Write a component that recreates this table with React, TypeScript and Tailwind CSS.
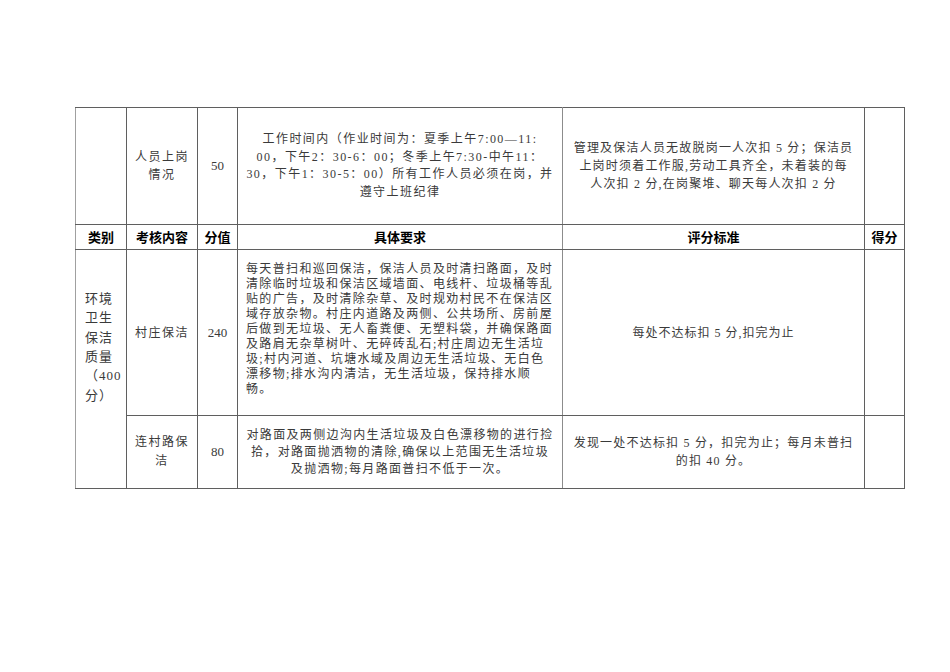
const body = "font-['Liberation_Serif','Noto_Sans_CJK_SC',serif] text-[#3a3a3a]";
const cell = "border border-[#5f5f5f] align-middle p-0";
const head = "border border-[#5f5f5f] align-middle p-0 text-center text-[13px] font-bold text-black font-['Noto_Sans_CJK_SC',sans-serif]";

function Lines({ lines, className }: { lines: string[]; className: string }) {
  return (
    <div className={className}>
      {lines.map((l, i) => (
        <div key={i}>{l}</div>
      ))}
    </div>
  );
}

export default function App() {
  return (
    <div className={`min-h-screen w-full bg-white pl-[75px] pt-[107px] ${body}`}>
      <table className="w-[829px] table-fixed border-collapse">
        <colgroup>
          <col className="w-[51px]" />
          <col className="w-[71px]" />
          <col className="w-[40px]" />
          <col className="w-[325px]" />
          <col className="w-[302px]" />
          <col className="w-[40px]" />
        </colgroup>
        <tbody>
          <tr className="h-[117px]">
            <td className={`${cell} border-l-[#a0a0a0]`}></td>
            <td className={cell}>
              <Lines lines={["人员上岗", "情况"]} className="text-center text-[12px] leading-[18px] tracking-[1.5px]" />
            </td>
            <td className={`${cell} text-center text-[13px]`}>50</td>
            <td className={`${cell} border-l-[#8c8c8c] border-r-[#8c8c8c]`}>
              <Lines
                lines={[
                  "工作时间内（作业时间为：夏季上午7:00—11:",
                  "00，下午2：30-6：00；冬季上午7:30-中午11：",
                  "30，下午1：30-5：00）所有工作人员必须在岗，并",
                  "遵守上班纪律",
                ]}
                className="text-center text-[12px] leading-[17.5px] tracking-[1.45px]"
              />
            </td>
            <td className={cell}>
              <Lines
                lines={[
                  "管理及保洁人员无故脱岗一人次扣 5 分；保洁员",
                  "上岗时须着工作服,劳动工具齐全，未着装的每",
                  "人次扣 2 分,在岗聚堆、聊天每人次扣 2 分",
                ]}
                className="text-center text-[12px] leading-[18px] tracking-[1.2px]"
              />
            </td>
            <td className={cell}></td>
          </tr>
          <tr className="h-[25px]">
            <td className={`${head} border-l-[#a0a0a0]`}>类别</td>
            <td className={head}>考核内容</td>
            <td className={head}>分值</td>
            <td className={`${head} border-l-[#8c8c8c] border-r-[#8c8c8c]`}>具体要求</td>
            <td className={head}>评分标准</td>
            <td className={head}>得分</td>
          </tr>
          <tr className="h-[166px]">
            <td rowSpan={2} className={`${cell} border-l-[#a0a0a0]`}>
              <Lines
                lines={["环境", "卫生", "保洁", "质量", "（400", "分）"]}
                className="pb-[44px] pl-[9px] text-[13px] leading-[19.3px] tracking-[1px]"
              />
            </td>
            <td className={`${cell} text-center text-[12px] tracking-[1.5px]`}>村庄保洁</td>
            <td className={`${cell} text-center text-[13px]`}>240</td>
            <td className={`${cell} border-l-[#8c8c8c] border-r-[#8c8c8c]`}>
              <Lines
                lines={[
                  "每天普扫和巡回保洁，保洁人员及时清扫路面，及时",
                  "清除临时垃圾和保洁区域墙面、电线杆、垃圾桶等乱",
                  "贴的广告，及时清除杂草、及时规劝村民不在保洁区",
                  "域存放杂物。村庄内道路及两侧、公共场所、房前屋",
                  "后做到无垃圾、无人畜粪便、无塑料袋，并确保路面",
                  "及路肩无杂草树叶、无碎砖乱石;村庄周边无生活垃",
                  "圾;村内河道、坑塘水域及周边无生活垃圾、无白色",
                  "漂移物;排水沟内清洁，无生活垃圾，保持排水顺",
                  "畅。",
                ]}
                className="pb-[6px] pl-[8px] text-[12px] leading-[15.1px] tracking-[1.35px] whitespace-nowrap"
              />
            </td>
            <td className={`${cell} text-center text-[12px] tracking-[1px]`}>每处不达标扣 5 分,扣完为止</td>
            <td className={cell}></td>
          </tr>
          <tr className="h-[73px]">
            <td className={cell}>
              <Lines lines={["连村路保", "洁"]} className="text-center text-[12px] leading-[19px] tracking-[1.5px]" />
            </td>
            <td className={`${cell} text-center text-[13px]`}>80</td>
            <td className={`${cell} border-l-[#8c8c8c] border-r-[#8c8c8c]`}>
              <Lines
                lines={[
                  "对路面及两侧边沟内生活垃圾及白色漂移物的进行捡",
                  "拾，对路面抛洒物的清除,确保以上范围无生活垃圾",
                  "及抛洒物;每月路面普扫不低于一次。",
                ]}
                className="text-center text-[12px] leading-[17px] tracking-[1.35px]"
              />
            </td>
            <td className={cell}>
              <Lines
                lines={["发现一处不达标扣 5 分，扣完为止；每月未普扫", "的扣 40 分。"]}
                className="text-center text-[12px] leading-[18px] tracking-[1.2px]"
              />
            </td>
            <td className={cell}></td>
          </tr>
        </tbody>
      </table>
    </div>
  );
}
